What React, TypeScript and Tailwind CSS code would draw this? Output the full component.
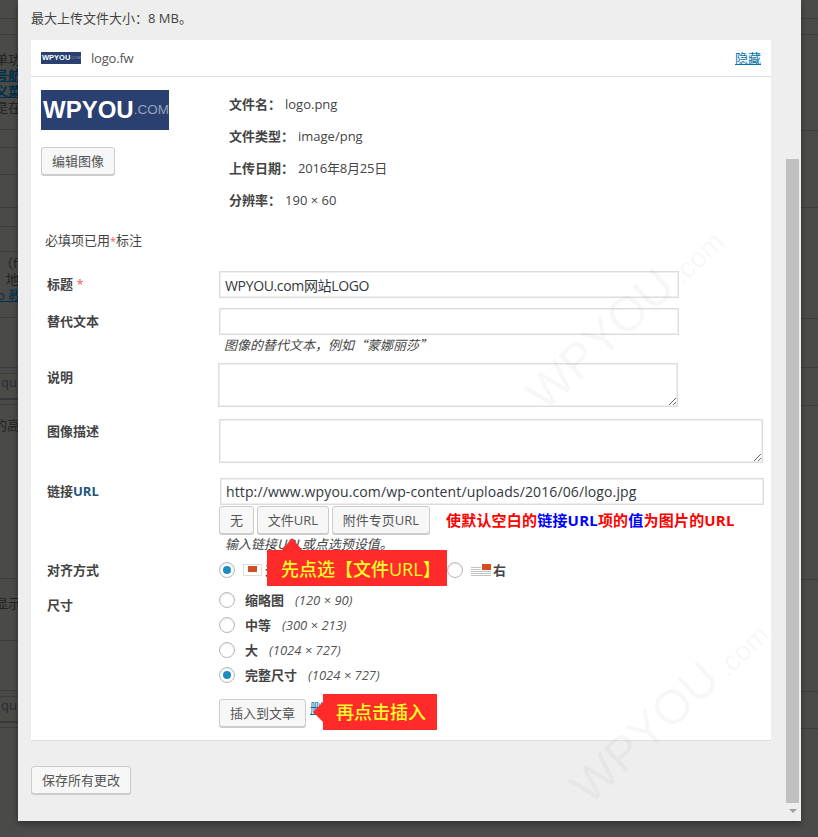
const leftRows = [
  { h: 19, line: true },
  { h: 16, line: true },
  { h: 16 },
  { h: 16, text: "单功", cls: "-ml-[5px] text-[#222]" },
  { h: 16, text: "号航", cls: "-ml-[5px] font-bold text-[#00304d] underline" },
  { h: 16, text: "义菜", cls: "-ml-[5px] font-bold text-[#00304d] underline" },
  { h: 16, text: "是在", cls: "-ml-[5px] text-[#222]" },
  { h: 15, line: true },
  { h: 18, line: true },
  { h: 27, line: true },
  { h: 33, line: true },
  { h: 19, line: true },
  { h: 25, line: true },
  { h: 3 },
  { h: 16, text: "（f", cls: "text-[#222]" },
  { h: 16, text: "地", cls: "ml-[6px] text-[#222]" },
  { h: 16, text: "o 教", cls: "-ml-[3px] text-[#00304d] underline" },
  { h: 15, line: true },
  { h: 50, line: true },
  { h: 6, line: true },
  { h: 26, text: "quo", cls: "ml-px text-[#2b2b35]", thick: true },
  { h: 5, line: true },
  { h: 12 },
  { h: 16, text: "的高", cls: "-ml-[6px] text-[#222]" },
  { h: 146, line: true },
  { h: 16 },
  { h: 16, text: "显示", cls: "-ml-[5px] text-[#222]" },
  { h: 30, line: true },
  { h: 50, line: true },
  { h: 6, line: true },
  { h: 26, text: "quo", cls: "ml-px text-[#2b2b35]", thick: true },
  { h: 5, line: true },
];

const rightRows = [19, 16, 96, 77, 111, 49, 38, 174, 112, 37];

function SideRow({ h, text, cls, line, thick }: { h: number; text?: string; cls?: string; line?: boolean; thick?: boolean }) {
  return (
    <div
      style={{ height: h }}
      className={`overflow-hidden whitespace-nowrap text-[13px] leading-[16px] ${line ? "border-b border-[#3d3d3d]" : ""} ${thick ? "border-b-2 border-[#383838]" : ""}`}
    >
      {text && <div className={cls}>{text}</div>}
    </div>
  );
}

function Btn({ children, className = "" }: { children: React.ReactNode; className?: string }) {
  return (
    <button className={`h-[28px] shrink-0 rounded-[3px] border border-[#ccc] bg-[#f7f7f7] text-[13px] text-[#555] shadow-[0_1px_0_#ccc] ${className}`}>
      {children}
    </button>
  );
}

function Radio({ checked }: { checked?: boolean }) {
  return (
    <span className="flex h-4 w-4 shrink-0 items-center justify-center rounded-full border border-[#b4b9be] bg-white shadow-[inset_0_1px_2px_rgba(0,0,0,0.1)]">
      {checked && <span className="h-2 w-2 rounded-full bg-[#1e8cbe]" />}
    </span>
  );
}

function Logo({ small }: { small?: boolean }) {
  return (
    <div
      className={`flex items-center overflow-hidden whitespace-nowrap bg-[#2a4070] font-['Liberation_Sans',sans-serif] ${
        small ? "h-[12px] w-[40px] pl-px" : "h-[40px] w-[128px] pl-[2px]"
      }`}
    >
      <span className={`font-bold text-white ${small ? "text-[7.5px]" : "text-[24px]"}`}>WPYOU</span>
      <span className={`text-[#97a3bc] ${small ? "text-[4px]" : "text-[13.5px]"}`}>.COM</span>
    </div>
  );
}

function Row({ label, pt, className = "", children }: { label: React.ReactNode; pt: string; className?: string; children: React.ReactNode }) {
  return (
    <div className={`flex items-start pl-4 ${className}`}>
      <label className={`w-[172px] shrink-0 font-bold text-[#444] ${pt}`}>{label}</label>
      <div className="min-w-0 flex-1">{children}</div>
    </div>
  );
}

const inputCls =
  "block h-[27px] border border-[#ddd] bg-white px-[5px] text-[14px] text-[#32373c] shadow-[inset_0_0_0_1px_#eee] outline-none";

const hintCls = "font-['Noto_Sans_CJK_SC',sans-serif] italic text-[#444]";

function Size({ name, dim, checked }: { name: string; dim: string; checked?: boolean }) {
  return (
    <div className="flex h-5 items-center">
      <Radio checked={checked} />
      <span className="ml-[10px] font-bold text-[#444]">{name}</span>
      <span className="ml-[11px] text-[13px] italic text-[#555]">{dim}</span>
    </div>
  );
}

function AlignItem({ label, icon, checked }: { label: string; icon: React.ReactNode; checked?: boolean }) {
  return (
    <div className="flex h-5 w-[76px] shrink-0 items-center">
      <Radio checked={checked} />
      <span className="ml-2 w-[22px] shrink-0">{icon}</span>
      <span className="font-bold text-[#444]">{label}</span>
    </div>
  );
}

const boxIcon = (
  <svg width="19" height="12" viewBox="0 0 19 12">
    <rect x="0.5" y="0.5" width="18" height="11" fill="#fff" stroke="#ddd" />
    <rect x="5" y="2" width="9" height="6" fill="#d54e21" />
  </svg>
);

const rightIcon = (
  <svg width="20" height="12" viewBox="0 0 20 12">
    <path d="M0 3.5h10M0 5.5h10M0 7.5h20M0 9.5h20M0 11.5h20" stroke="#c4c4c4" />
    <rect x="11" y="0" width="9" height="6" fill="#d54e21" />
  </svg>
);

export default function App() {
  return (
    <div className="relative flex h-[837px] w-[818px] items-start overflow-hidden bg-[#4b4b4b] font-['Open_Sans','Noto_Sans_CJK_SC',sans-serif] text-[13px] leading-5 text-[#444]">
      <div className="h-[837px] w-[18px] shrink-0 overflow-hidden bg-[#4a4a46]">
        {leftRows.map((r, i) => (
          <SideRow key={i} {...r} />
        ))}
      </div>

      {/* modal */}
      <div className="relative z-10 flex w-[783px] shrink-0 bg-[#eee] shadow-[0_3px_6px_rgba(0,0,0,0.35)]">
        <div className="w-[768px] shrink-0 pl-[13px] pt-2">
          <p className="mb-3 h-5">最大上传文件大小：8 MB。</p>

          <div className="w-[740px] border-b border-[#ddd] bg-white pb-[13px]">
            <div className="flex h-[37px] items-center border-b border-[#ddd] pl-[10px] pr-[10px]">
              <Logo small />
              <span className="ml-[10px] tracking-[-0.2px] text-[#555]">logo.fw</span>
              <a className="ml-auto text-[#0073aa] underline">隐藏</a>
            </div>

            <div className="flex">
              <div className="w-[198px] shrink-0 pl-[10px] pt-[13px]">
                <Logo />
                <Btn className="mt-[17px] w-[74px]">编辑图像</Btn>
              </div>
              <div className="flex flex-col gap-3 pt-[17px]">
                <p><b className="mr-1 font-bold">文件名：</b>logo.png</p>
                <p><b className="mr-1 font-bold">文件类型：</b>image/png</p>
                <p className="tracking-[-0.2px]"><b className="mr-1 font-bold tracking-normal">上传日期：</b>2016年8月25日</p>
                <p><b className="mr-1 font-bold">分辨率：</b>190 × 60</p>
              </div>
            </div>

            <p className="mt-5 h-5 pl-[14px]">
              必填项已用<span className="text-[11px] text-[#f55]">*</span>标注
            </p>

            <Row className="mt-[21px]" pt="pt-[3px]" label={<>标题 <span className="font-normal text-[#f55]">*</span></>}>
              <input readOnly value="WPYOU.com网站LOGO" className={`${inputCls} w-[460px] tracking-[-0.35px]`} />
            </Row>

            <Row className="mt-[10px]" pt="pt-[3px]" label="替代文本">
              <input readOnly className={`${inputCls} w-[460px]`} />
              <p className={`${hintCls} pl-[5px]`}>图像的替代文本，例如“蒙娜丽莎”</p>
            </Row>

            <Row className="mt-2" pt="pt-1" label="说明">
              <textarea readOnly className={`${inputCls} -ml-px !h-[44px] w-[460px]`} />
            </Row>

            <Row className="mt-3" pt="pt-[2px]" label="图像描述">
              <textarea readOnly className={`${inputCls} !h-[44px] w-[544px]`} />
            </Row>

            <Row className="mt-[15px]" pt="pt-[3px]" label={<>链接<span className="text-[#23527c]">URL</span></>}>
              <input
                readOnly
                value="http://www.wpyou.com/wp-content/uploads/2016/06/logo.jpg"
                className={`${inputCls} ml-px w-[544px] tracking-[0.12px]`}
              />
              <div className="mt-px flex items-center">
                <Btn className="w-[35px]">无</Btn>
                <Btn className="ml-[3px] w-[72px]">文件URL</Btn>
                <Btn className="ml-[3px] w-[98px]">附件专页URL</Btn>
                <span className="ml-4 whitespace-nowrap text-[15px] font-bold tracking-[0.2px] text-[#f00]">
                  使默认空白的<span className="text-[#00f]">链接URL</span>项的<span className="text-[#00f]">值</span>为图片的URL
                </span>
              </div>
              <p className={`${hintCls} pl-[6px]`}>输入链接URL或点选预设值。</p>
            </Row>

            <Row className="mt-[6px]" pt="" label="对齐方式">
              <div className="flex">
                <AlignItem checked label="无" icon={boxIcon} />
                <AlignItem label="左" icon={boxIcon} />
                <AlignItem label="中" icon={boxIcon} />
                <AlignItem label="右" icon={rightIcon} />
              </div>
            </Row>

            <Row className="mt-[10px]" pt="pt-[5px]" label="尺寸">
              <div className="flex flex-col gap-[5px]">
                <Size name="缩略图" dim="(120 × 90)" />
                <Size name="中等" dim="(300 × 213)" />
                <Size name="大" dim="(1024 × 727)" />
                <Size name="完整尺寸" dim="(1024 × 727)" checked />
              </div>
              <div className="mt-[14px] flex items-center">
                <Btn className="w-[87px]">插入到文章</Btn>
                <a className="ml-1 -mt-[10px] text-[#0073aa] underline">删除</a>
              </div>
            </Row>
          </div>

          <Btn className="mt-[25px] mb-[27px] w-[100px]">保存所有更改</Btn>
        </div>

        {/* scrollbar */}
        <div className="flex w-[13px] shrink-0 flex-col items-center pt-[159px]">
          <div className="h-[644px] w-[13px] bg-[#c0c0c0]" />
          <div className="mt-[6px] h-0 w-0 border-x-[4px] border-t-[4px] border-x-transparent border-t-[#a0a0a0]" />
        </div>
      </div>

      <div className="h-[837px] w-[17px] shrink-0 overflow-hidden bg-[#4a4a46]">
        {rightRows.map((h, i) => (
          <div key={i} style={{ height: h }} className="border-b border-[#3d3d3d]" />
        ))}
      </div>

      {/* watermarks */}
      <div className="pointer-events-none absolute left-[555px] top-[369px] z-20 origin-[0_100%] -rotate-[43deg] whitespace-nowrap font-['Liberation_Sans',sans-serif] text-[48px] leading-[48px] text-black/[0.05]">
        WPYOU<span className="ml-[6px] text-[28px]">.com</span>
      </div>
      <div className="pointer-events-none absolute left-[600px] top-[762px] z-20 origin-[0_100%] -rotate-[43deg] whitespace-nowrap font-['Liberation_Sans',sans-serif] text-[48px] leading-[48px] text-black/[0.05]">
        WPYOU<span className="ml-[6px] text-[28px]">.com</span>
      </div>

      {/* annotations */}
      <div className="absolute left-[267px] top-[550px] z-30 flex h-[36px] w-[180px] items-center bg-[#ff2a2a] pl-[14px] pt-px text-[18px] font-medium text-[#ffff2a]">
        <span className="absolute -top-[12px] left-[15px] h-0 w-0 border-x-[10px] border-b-[12px] border-x-transparent border-b-[#ff2a2a]" />
        先点选【文件URL】
      </div>
      <div className="absolute left-[323px] top-[694px] z-30 flex h-[36px] w-[114px] items-center bg-[#ff2a2a] pl-[13px] text-[18px] font-medium text-[#ffff2a]">
        <span className="absolute -left-[10px] top-[8px] h-0 w-0 border-y-[10px] border-r-[10px] border-y-transparent border-r-[#ff2a2a]" />
        再点击插入
      </div>
    </div>
  );
}
